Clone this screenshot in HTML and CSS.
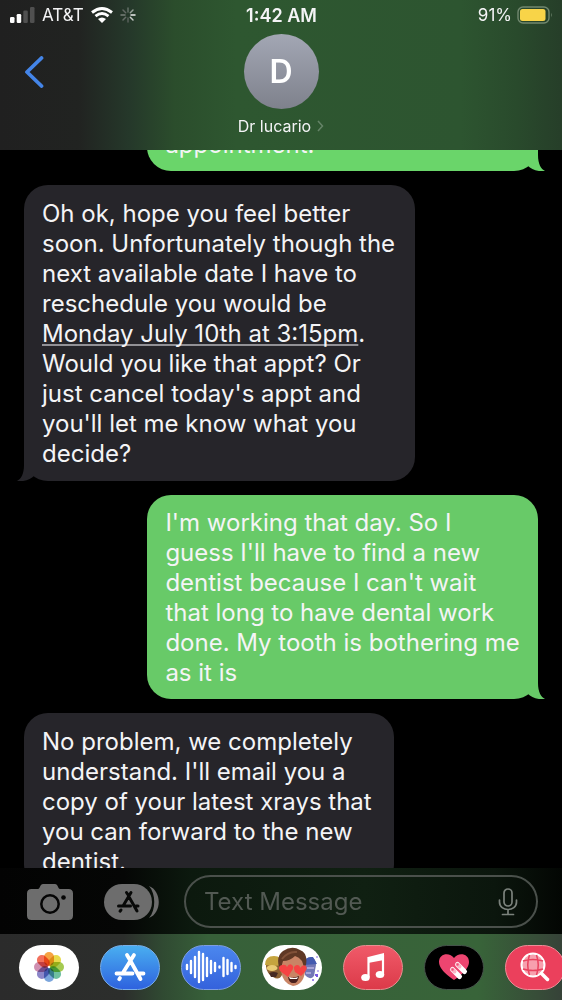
FILE: index.html
```html
<!DOCTYPE html>
<html lang="en">
<head>
<meta charset="utf-8">
<meta name="viewport" content="width=device-width, initial-scale=1">
<title>Messages - Dr lucario</title>
<link rel="stylesheet" href="styles.css">
</head>
<body>
<header class="header">
  <div class="status">
    <div class="status-left">
      <svg class="signal" viewBox="0 0 25 16" width="25" height="16" aria-hidden="true"><rect x="0" y="10" width="4.500" height="6" rx="1.3" fill="#fff"/><rect x="6.700" y="7" width="4.500" height="9" rx="1.3" fill="#fff"/><rect x="13.300" y="3.500" width="4.500" height="12.500" rx="1.300" fill="#505050"/><rect x="20" y="0" width="4.500" height="16" rx="1.300" fill="#505050"/></svg>
      <span>AT&amp;T</span>
      <svg viewBox="0 0 22 16" width="22" height="16" aria-hidden="true"><g fill="none" stroke="#fff" stroke-width="2.900"><path d="M1 5.500Q11-2.500 21 5.500"/><path d="M4.500 9.200Q11 4 17.500 9.200"/></g><path d="M7 12Q11 8.800 15 12L11 16Z" fill="#fff"/></svg>
      <svg viewBox="0 0 16 16" width="16" height="16" aria-hidden="true"><g stroke-width="1.500" stroke-linecap="round"><path d="M8 1v4" stroke="#657068"/><path d="M13 3l-2.700 2.700" stroke="#98a19a"/><path d="M15 8h-4" stroke="#eee"/><path d="M13 13l-2.700-2.700" stroke="#c6cac7"/><path d="M8 15v-4" stroke="#59605b"/><path d="M3 13l2.700-2.700" stroke="#666d68"/><path d="M1 8h4" stroke="#78807a"/><path d="M3 3l2.700 2.700" stroke="#626964"/></g></svg>
    </div>
    <time class="clock">1:42 AM</time>
    <div class="status-right">
      <span>91%</span>
      <svg viewBox="0 0 36 18" width="36" height="18" aria-hidden="true"><rect x="1" y="1" width="31" height="16" rx="5" fill="none" stroke="#71886f" stroke-width="1.400"/><rect x="3" y="3" width="25.500" height="12" rx="2.500" fill="#f8d448"/><path d="M34 6.500q1.500 2.500 0 5z" fill="#71886f"/></svg>
    </div>
  </div>
  <div class="contact-row">
    <button class="back" aria-label="Back"><svg viewBox="0 0 20 32" width="20" height="32" aria-hidden="true"><path d="M17.500 2L3 16l14.500 14" fill="none" stroke="#4485e8" stroke-width="3.800" stroke-linecap="round" stroke-linejoin="round"/></svg></button>
    <button class="contact">
      <span class="avatar">D</span>
      <span class="name">Dr lucario <svg viewBox="0 0 8 12" width="8" height="12" aria-hidden="true"><path d="M2 1l4.500 5L2 11" fill="none" stroke="#668468" stroke-width="1.500"/></svg></span>
    </button>
  </div>
</header>

<main class="thread">
  <div class="bubble sent earlier">appointment.
    <svg class="tail" viewBox="0 0 17 24" width="17" height="24" aria-hidden="true"><path d="M10 0V8C10 17 13 22 17 24C9 25 3 22 0 19V0Z"/></svg>
  </div>
  <div class="bubble received">Oh ok, hope you feel better<br>soon. Unfortunately though the<br>next available date I have to<br>reschedule you would be<br><a href="#">Monday July 10th at 3:15pm</a>.<br>Would you like that appt? Or<br>just cancel today's appt and<br>you'll let me know what you<br>decide?
    <svg class="tail" viewBox="0 0 17 24" width="17" height="24" aria-hidden="true"><path d="M7 0V8C7 17 4 22 0 24C8 25 14 22 17 19V0Z"/></svg>
  </div>
  <div class="bubble sent">I'm working that day. So I<br>guess I'll have to find a new<br>dentist because I can't wait<br>that long to have dental work<br>done. My tooth is bothering me<br>as it is
    <svg class="tail" viewBox="0 0 17 24" width="17" height="24" aria-hidden="true"><path d="M10 0V8C10 17 13 22 17 24C9 25 3 22 0 19V0Z"/></svg>
  </div>
  <div class="bubble received latest">No problem, we completely<br>understand. I'll email you a<br>copy of your latest xrays that<br>you can forward to the new<br>dentist.</div>
</main>

<form class="composer">
  <button type="button" class="tool" aria-label="Camera"><svg viewBox="0 0 46 36" width="46" height="36" aria-hidden="true"><path d="M4.500 5H11c2 0 2-5 5-5h12c3 0 3 5 5 5h8.500Q46 5 46 9.500v22Q46 36 41.500 36h-37Q0 36 0 31.500v-22Q0 5 4.500 5Z" fill="#6d6d6d"/><circle cx="23" cy="20" r="8.700" fill="none" stroke="#050505" stroke-width="2.500"/><circle cx="36.500" cy="13.500" r="2.300" fill="#050505"/></svg></button>
  <button type="button" class="tool" aria-label="Apps"><svg viewBox="0 0 55 36" width="55" height="36" aria-hidden="true"><path d="M45 2C58 7 58 29 45 34C52 26 52 10 45 2Z" fill="#6d6d6d"/><rect width="48" height="36" rx="18" fill="#6d6d6d"/><g transform="translate(13 7)" stroke="#080908" stroke-width="3" stroke-linecap="round" fill="none"><path d="M9.500 1.500l2 3M14 1.500L6 15M1.500 15h12M19 15h2M11.500 5L20 20M4 19l-1 1.200"/></g></svg></button>
  <div class="field">
    <input class="entry" type="text" placeholder="Text Message" aria-label="Text Message">
    <button type="button" class="mic" aria-label="Dictate"><svg viewBox="0 0 20 28" width="20" height="28" aria-hidden="true"><g fill="none" stroke="#7b827c" stroke-width="1.700" stroke-linecap="round"><rect x="6" y="1" width="8" height="17" rx="4"/><path d="M1.500 12v2c0 10 17 10 17 0v-2M10 21.500V26M4.500 26.500h11"/></g></svg></button>
  </div>
</form>

<nav class="drawer" aria-label="Message apps">
  <button class="app photos" aria-label="Photos"><svg class="petals" viewBox="0 0 32 32" width="32" height="32" aria-hidden="true"><rect x="11" y="1" width="10" height="14" rx="5" fill="#f6a343"/><rect x="11" y="1" width="10" height="14" rx="5" fill="#e8da4b" transform="rotate(45 16 16)"/><rect x="11" y="1" width="10" height="14" rx="5" fill="#a5ca51" transform="rotate(90 16 16)"/><rect x="11" y="1" width="10" height="14" rx="5" fill="#6fc0a0" transform="rotate(135 16 16)"/><rect x="11" y="1" width="10" height="14" rx="5" fill="#7ba5dc" transform="rotate(180 16 16)"/><rect x="11" y="1" width="10" height="14" rx="5" fill="#8c86c9" transform="rotate(225 16 16)"/><rect x="11" y="1" width="10" height="14" rx="5" fill="#cf8fb0" transform="rotate(270 16 16)"/><rect x="11" y="1" width="10" height="14" rx="5" fill="#f2705c" transform="rotate(315 16 16)"/></svg></button>
  <button class="app store" aria-label="App Store"><svg viewBox="0 0 32 30" width="32" height="30" aria-hidden="true"><g stroke="#fff" stroke-width="3.800" stroke-linecap="round" fill="none"><path d="M13 3l3 5M20 3L8.500 21.500M2.500 21.500h16M25 21.500h4.500M16 8l10.500 19M6 26l-.8 1.200"/></g></svg></button>
  <button class="app audio" aria-label="Audio"><svg viewBox="0 0 52 34" width="52" height="34" aria-hidden="true"><g stroke="#fff" stroke-width="2.400" stroke-linecap="round"><path d="M2 15v4M6 11v12M10 7v20M14 2v30M18 4v26M22 8v18M26 11v12M30 13v8M34.500 16.500v1M38.500 8v18M42.500 10v14M46.500 13v8M50.500 16v2"/></g></svg></button>
  <button class="app memoji" aria-label="Memoji"><svg viewBox="0 0 58 40" width="58" height="40" aria-hidden="true"><path d="M3 18Q3 10 11 10q7 0 8 8v10q-3 6-9 2Q4 27 3 20Z" fill="#8c6233"/><path d="M2 18Q2 9 11 9q8 0 9 9l-9 1Z" fill="#c5a43e"/><ellipse cx="9" cy="21" rx="5.500" ry="3" fill="#e9cb74"/><path d="M6 26q5-2 9 0l-2 4H8Z" fill="#452a22"/><path d="M41 18q1-8 7-8 5 1 5 8l-2 11q-4 5-9-1Z" fill="#7378b5"/><path d="M40 16q3-7 10-6l4 7-13 1Z" fill="#445aaf"/><path d="M44 21h7M43 26h5" stroke="#a8a4d6" stroke-width="2"/><g fill="#7a5be0"><circle cx="54" cy="10" r=".8"/><circle cx="55" cy="24" r=".8"/><circle cx="50" cy="33" r="1"/><path d="M52 27h3v3h-2v-1h-1z"/></g><path d="M18 17q0-10 12-10t12 10v8q-2 13-12 14Q20 37 18 24Z" fill="#c98465"/><path d="M16 20Q13 9 20 4q9-6 17-1 8 3 6 15l-2 2-2-6q-3-4-7-5-5 5-12 5l-2 7Z" fill="#5f3824"/><path d="M19 12q6-8 15-7" fill="none" stroke="#815138" stroke-width="2"/><path d="M25 30q5 2 11-1-1 8-6 7-4 0-5-6Z" fill="#48201d"/><path d="M26 30q5 2 9 0l-1 2h-7Z" fill="#fff"/><path d="M25 30l-8-6q-3-5 2-6 4-1 5 2 2-4 5-2 3 2-1 7ZM38 29l-6-4q-3-6 2-7 3 0 3 3 3-4 6-2 2 3-2 7Z" fill="#f64343"/></svg></button>
  <button class="app music" aria-label="Music"><svg viewBox="0 0 26 30" width="26" height="30" aria-hidden="true"><path d="M8 5L24 1v7L8 11Z" fill="#fff"/><path d="M8.500 5v20M23 3v18" stroke="#fff" stroke-width="2.200" fill="none"/><ellipse cx="5.500" cy="25.500" rx="4.300" ry="3.500" fill="#fff"/><ellipse cx="20" cy="22.500" rx="4.300" ry="3.500" fill="#fff"/></svg></button>
  <button class="app touch" aria-label="Digital Touch"><svg viewBox="0 0 32 28" width="32" height="28" aria-hidden="true"><path d="M16 27Q1 17 1 9C1 0 12-1 16 5 20-1 31 0 31 9q0 8-15 18Z" fill="#ed4570"/><g stroke-linecap="round"><path d="M14.500 16.500l7 7M19.500 11.500l7 7" stroke="#fff" stroke-width="5"/><path d="M14.500 16.500l2 2M19.500 11.500l2 2" stroke="#f9b6c5" stroke-width="4"/><path d="M14.500 16.500h.1M19.500 11.500h.1" stroke="#ef5178" stroke-width="2.400"/></g></svg></button>
  <button class="app images" aria-label="Images"><svg viewBox="0 0 30 30" width="30" height="30" aria-hidden="true"><circle cx="13" cy="13" r="11.500" fill="#f7a0ae" stroke="#fff" stroke-width="2"/><path d="M9.500 3Q6 13 9.500 23M16.500 3q3.500 10 0 20M3 9q10-3 20 0M3 17q10 3 20 0" fill="none" stroke="#e9435f" stroke-width="1.500"/><path d="M21.500 21.500l6 6" stroke="#fff" stroke-width="3.500" stroke-linecap="round"/></svg></button>
</nav>
</body>
</html>
```
FILE: styles.css
```css
* {
  box-sizing: border-box;
}

body {
  margin: 0;
  height: 100vh;
  display: flex;
  flex-direction: column;
  overflow: hidden;
  background: #000;
  color: #f4f4f6;
  font-family: Inter, "Liberation Sans", sans-serif;
}

button {
  padding: 0;
  border: 0;
  background: none;
  color: inherit;
  font: inherit;
}

svg {
  display: block;
  flex: none;
}

.header {
  flex: none;
  padding-bottom: 14px;
  background: linear-gradient(90deg, #202020 0%, #212321 14%, #25382a 23%, #2b4d2c 31%, #2e5730 42%, #2d5530 82%, #294a2c 92%, #263e29 100%);
}

.status {
  height: 34px;
  padding: 0 9px 4px 10px;
  display: grid;
  grid-template-columns: 1fr auto 1fr;
  align-items: center;
  font-size: 17px;
}

.status-left,
.status-right {
  display: flex;
  align-items: center;
  gap: 5px;
}

.status-left {
  gap: 7px;
}

.status-right {
  justify-content: flex-end;
}

.clock {
  font-size: 18px;
  font-weight: 600;
}

.contact-row {
  display: grid;
  grid-template-columns: 1fr auto 1fr;
  align-items: start;
}

.back {
  justify-self: start;
  padding: 22px 24px;
}

.contact {
  display: flex;
  flex-direction: column;
  align-items: center;
  gap: 7px;
}

.avatar {
  width: 75px;
  height: 75px;
  border-radius: 50%;
  display: grid;
  place-items: center;
  background: linear-gradient(#a3a7b4, #7e818c);
  color: #fff;
  font-size: 32px;
  font-weight: 600;
}

.name {
  display: flex;
  align-items: center;
  gap: 5px;
  font-size: 16px;
  line-height: 20px;
}

.thread {
  flex: 1;
  min-height: 0;
  overflow: hidden;
  padding: 0 24px;
  display: flex;
  flex-direction: column;
  gap: 14px;
}

.bubble {
  position: relative;
  flex: none;
  width: 76%;
  padding: 14px 18px 12px;
  border-radius: 24px;
  font-size: 24px;
  line-height: 30px;
  white-space: nowrap;
}

.received {
  align-self: flex-start;
  background: #26252a;
  fill: #26252a;
}

.sent {
  align-self: flex-end;
  padding: 13px 18px 11px;
  background: #68ca68;
  fill: #68ca68;
}

.earlier {
  margin-top: -33px;
  background: #6ad56a;
  fill: #6ad56a;
}

.latest {
  width: 72%;
}

.bubble a {
  color: inherit;
  text-decoration-color: #929196;
  text-decoration-thickness: 2px;
  text-underline-offset: 2px;
  text-decoration-skip-ink: none;
}

.tail {
  position: absolute;
  bottom: 0;
}

.received .tail {
  left: -7px;
}

.sent .tail {
  right: -7px;
}

.composer {
  flex: none;
  padding: 7px 24px 6px 27px;
  display: flex;
  align-items: center;
  background: linear-gradient(90deg, #030303 0%, #050605 22%, #0c190e 34%, #102012 65%, #0b160d 88%, #030603 100%);
}

.tool {
  margin-right: 31px;
}

.tool + .tool {
  margin-right: 25px;
}

.field {
  flex: 1;
  min-width: 0;
  height: 53px;
  padding: 0 18px;
  display: flex;
  align-items: center;
  border: 2px solid #4a504b;
  border-radius: 27px;
}

.entry {
  flex: 1;
  min-width: 0;
  padding: 0;
  border: 0;
  outline: 0;
  background: none;
  color: #f4f4f6;
  font: inherit;
  font-size: 24px;
}

.entry::placeholder {
  color: #525953;
  opacity: 1;
}

.drawer {
  flex: none;
  height: 66px;
  padding: 0 19px;
  display: flex;
  align-items: center;
  gap: 21px;
  overflow: hidden;
  background: linear-gradient(90deg, #2b2b2b 0%, #2c2e2c 22%, #304a32 29%, #376039 37%, #386439 85%, #374c38 96%, #364238 100%);
}

.app {
  flex: none;
  width: 60px;
  height: 45px;
  border-radius: 23px;
  display: grid;
  place-items: center;
  overflow: hidden;
}

.photos,
.memoji {
  background: #fff;
}

.petals rect {
  mix-blend-mode: multiply;
}

.store {
  background: linear-gradient(#49aef0, #2e62df);
  border: 1px solid #78aee9;
}

.audio {
  background: linear-gradient(#4b87ee, #3462dc);
  border: 1px solid #7d9de0;
}

.music {
  background: linear-gradient(#f05a69, #dc3a49);
  border: 1px solid #e98e91;
}

.touch {
  background: #000;
  border: 1px solid #45524a;
}

.images {
  background: #eb405c;
  border: 1px solid #ef8b97;
}
```
